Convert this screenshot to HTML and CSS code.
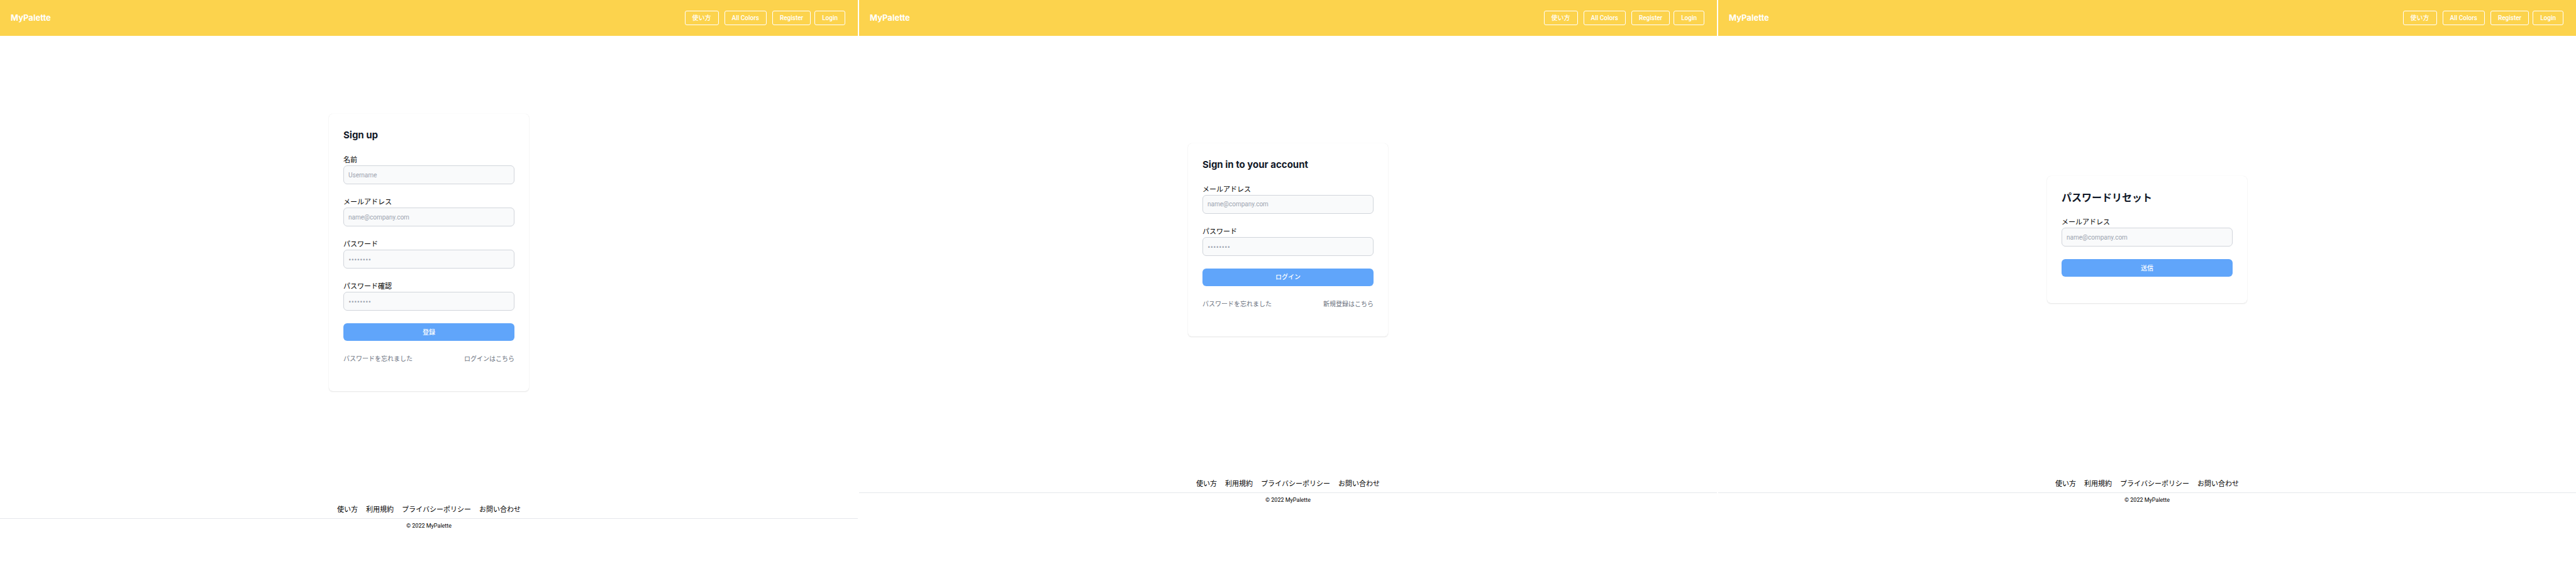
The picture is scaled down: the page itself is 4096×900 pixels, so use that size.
FILE: index.html
```html
<!DOCTYPE html>
<html lang="ja">
<head>
<meta charset="utf-8">
<title>MyPalette</title>
<link rel="stylesheet" href="styles.css">
</head>
<body>
<div class="screens">
  <section class="screen">
    <header class="header">
      <a class="logo" href="#">MyPalette</a>
      <nav class="nav">
        <a class="nav-link" href="#">使い方</a>
        <a class="nav-link" href="#">All Colors</a>
        <div class="nav-auth">
          <a class="nav-link" href="#">Register</a>
          <a class="nav-link" href="#">Login</a>
        </div>
      </nav>
    </header>
    <main class="main">
      <form class="card">
        <h1 class="title">Sign up</h1>
        <div class="field">
          <label class="label" for="up-name">名前</label>
          <input class="input" id="up-name" type="text" placeholder="Username">
        </div>
        <div class="field">
          <label class="label" for="up-email">メールアドレス</label>
          <input class="input" id="up-email" type="email" placeholder="name@company.com">
        </div>
        <div class="field">
          <label class="label" for="up-pass">パスワード</label>
          <input class="input input-password" id="up-pass" type="password" placeholder="••••••••">
        </div>
        <div class="field">
          <label class="label" for="up-confirm">パスワード確認</label>
          <input class="input input-password" id="up-confirm" type="password" placeholder="••••••••">
        </div>
        <button class="submit" type="submit">登録</button>
        <div class="links">
          <a class="link" href="#">パスワードを忘れました</a>
          <a class="link" href="#">ログインはこちら</a>
        </div>
      </form>
    </main>
    <footer class="footer">
      <nav class="footer-nav">
        <a href="#">使い方</a>
        <a href="#">利用規約</a>
        <a href="#">プライバシーポリシー</a>
        <a href="#">お問い合わせ</a>
      </nav>
      <p class="copyright">© 2022 MyPalette</p>
    </footer>
  </section>

  <section class="screen">
    <header class="header">
      <a class="logo" href="#">MyPalette</a>
      <nav class="nav">
        <a class="nav-link" href="#">使い方</a>
        <a class="nav-link" href="#">All Colors</a>
        <div class="nav-auth">
          <a class="nav-link" href="#">Register</a>
          <a class="nav-link" href="#">Login</a>
        </div>
      </nav>
    </header>
    <main class="main">
      <form class="card">
        <h1 class="title">Sign in to your account</h1>
        <div class="field">
          <label class="label" for="in-email">メールアドレス</label>
          <input class="input" id="in-email" type="email" placeholder="name@company.com">
        </div>
        <div class="field">
          <label class="label" for="in-pass">パスワード</label>
          <input class="input input-password" id="in-pass" type="password" placeholder="••••••••">
        </div>
        <button class="submit" type="submit">ログイン</button>
        <div class="links">
          <a class="link" href="#">パスワードを忘れました</a>
          <a class="link" href="#">新規登録はこちら</a>
        </div>
      </form>
    </main>
    <footer class="footer">
      <nav class="footer-nav">
        <a href="#">使い方</a>
        <a href="#">利用規約</a>
        <a href="#">プライバシーポリシー</a>
        <a href="#">お問い合わせ</a>
      </nav>
      <p class="copyright">© 2022 MyPalette</p>
    </footer>
  </section>

  <section class="screen">
    <header class="header">
      <a class="logo" href="#">MyPalette</a>
      <nav class="nav">
        <a class="nav-link" href="#">使い方</a>
        <a class="nav-link" href="#">All Colors</a>
        <div class="nav-auth">
          <a class="nav-link" href="#">Register</a>
          <a class="nav-link" href="#">Login</a>
        </div>
      </nav>
    </header>
    <main class="main">
      <form class="card">
        <h1 class="title title-ja">パスワードリセット</h1>
        <div class="field">
          <label class="label" for="reset-email">メールアドレス</label>
          <input class="input" id="reset-email" type="email" placeholder="name@company.com">
        </div>
        <button class="submit" type="submit">送信</button>
      </form>
    </main>
    <footer class="footer">
      <nav class="footer-nav">
        <a href="#">使い方</a>
        <a href="#">利用規約</a>
        <a href="#">プライバシーポリシー</a>
        <a href="#">お問い合わせ</a>
      </nav>
      <p class="copyright">© 2022 MyPalette</p>
    </footer>
  </section>
</div>
</body>
</html>
```
FILE: styles.css
```css
*,
*::before,
*::after {
  box-sizing: border-box;
}

body {
  margin: 0;
  background: #fff;
  color: #000;
  font-family: Roboto, "Noto Sans CJK JP", sans-serif;
  font-size: 11px;
  line-height: 17px;
}

a {
  color: inherit;
  text-decoration: none;
}

.screens {
  display: grid;
  grid-template-columns: repeat(3, 1fr);
  gap: 2px;
}

.header {
  display: flex;
  align-items: center;
  justify-content: space-between;
  height: 57px;
  padding: 0 20px 0 17px;
  background: #fcd34d;
  color: #fff;
}

.logo,
.title {
  font-family: Inter, "Noto Sans CJK JP", sans-serif;
}

.logo {
  font-size: 13px;
  font-weight: 700;
}

.nav {
  display: flex;
  gap: 9px;
}

.nav-auth {
  display: flex;
  gap: 6px;
}

.nav-link {
  padding: 0 11px;
  border: 1px solid #fff;
  border-radius: 3px;
  font-size: 10px;
  font-weight: 500;
  line-height: 21px;
}

.main {
  display: flex;
  align-items: center;
  justify-content: center;
  min-height: 646px;
  padding: 124px 0 122px;
}

.card {
  display: flex;
  flex-direction: column;
  gap: 20px;
  width: 318px;
  padding: 23px 23px 42px;
  border-radius: 6px;
  background: #fff;
  box-shadow: 0 1px 2px rgba(0, 0, 0, 0.1), 0 0 1px rgba(0, 0, 0, 0.1);
}

.title {
  margin: 0;
  color: #111827;
  font-size: 15px;
  font-weight: 700;
  line-height: 22px;
}

.title-ja {
  font-size: 16px;
}

.field {
  display: flex;
  flex-direction: column;
}

.input {
  width: 100%;
  height: 30px;
  padding: 0 7px;
  border: 1px solid #d1d5db;
  border-radius: 6px;
  background: #f9fafb;
  color: #111827;
  font: inherit;
  font-size: 10px;
}

.input-password {
  font-family: Inter, sans-serif;
  font-size: 8px;
}

.input::placeholder {
  color: #9ca3af;
  opacity: 1;
}

.submit {
  height: 28px;
  padding: 0;
  border: 0;
  border-radius: 6px;
  background: #60a5fa;
  color: #fff;
  font: inherit;
  font-size: 10px;
  font-weight: 500;
}

.links {
  display: flex;
  justify-content: space-between;
  color: #6b7280;
  font-size: 10px;
  line-height: 18px;
}

.footer {
  padding-top: 58px;
  text-align: center;
}

.footer-nav {
  display: flex;
  justify-content: center;
  gap: 13px;
  padding-bottom: 5px;
  border-bottom: 1px solid #e5e7eb;
}

.copyright {
  margin: 3px 0 0;
  font-size: 9px;
}
```
